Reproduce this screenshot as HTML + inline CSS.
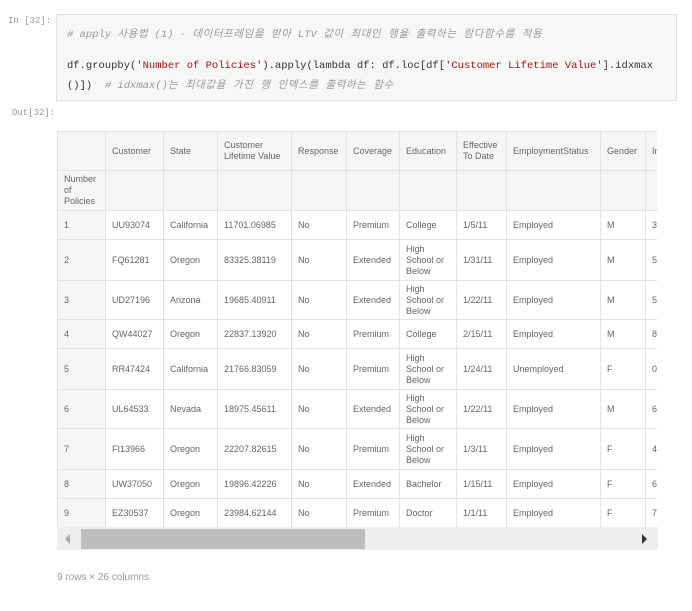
<!DOCTYPE html>
<html><head><meta charset="utf-8"><style>
body{margin:0;width:692px;height:611px;background:#fff;position:relative;overflow:hidden;font-family:"Liberation Sans","Noto Sans CJK KR",sans-serif;}
.p{position:absolute;font-family:"Liberation Mono","Noto Sans CJK KR",monospace;font-size:9px;color:#999;}
.code{position:absolute;left:56px;top:14px;width:621px;height:87px;background:#f7f7f7;border:1px solid #e0e0e0;box-sizing:border-box;font-family:"Liberation Mono","Noto Sans CJK KR",monospace;font-size:10.5px;color:#333;}
.code div{position:absolute;left:10px;white-space:pre;letter-spacing:0px}
.c{color:#999;font-style:italic}
.k{letter-spacing:0.6px}
.s{color:#a31515}
.wrap{position:absolute;left:57px;top:131px;width:600px;height:396px;overflow:hidden;}
table{border-collapse:collapse;table-layout:fixed;width:640px;font-size:9px;color:#666;}
td,th{border:1px solid #e3e3e3;padding:0 6px;font-weight:normal;text-align:left;line-height:11px;vertical-align:middle;overflow:hidden;white-space:normal}
thead th{background:#f5f5f5}
tbody th{background:#f5f5f5}
.sb{position:absolute;left:57px;top:527px;width:601px;height:23px;background:#eee;}
</style></head><body>
<div class="p" style="left:8px;top:16px">In [32]:</div>
<div class="code">
<div class="c" style="top:11px"># apply <span class="k">사용법</span> (1) - <span class="k">데이터프레임을 받아</span> LTV <span class="k">값이 최대인 행을 출력하는 람다함수를 적용</span></div>
<div style="top:45px">df.groupby(<span class="s">'Number of Policies'</span>).apply(lambda df: df.loc[df[<span class="s">'Customer Lifetime Value'</span>].idxmax</div>
<div style="top:62px">()])  <span class="c"># idxmax()<span class="k">는 최대값을 가진 행 인덱스를 출력하는 함수</span></span></div>
</div>
<div class="p" style="left:12px;top:108px">Out[32]:</div>
<div class="wrap"><table>
<colgroup><col style="width:48px"><col style="width:58px"><col style="width:54px"><col style="width:74px"><col style="width:55px"><col style="width:53px"><col style="width:57px"><col style="width:50px"><col style="width:94px"><col style="width:45px"><col style="width:52px"></colgroup>
<thead>
<tr style="height:39px"><th></th><th>Customer</th><th>State</th><th>Customer Lifetime Value</th><th>Response</th><th>Coverage</th><th>Education</th><th>Effective To Date</th><th>EmploymentStatus</th><th>Gender</th><th>Income</th></tr>
<tr style="height:40px"><th>Number of Policies</th><th></th><th></th><th></th><th></th><th></th><th></th><th></th><th></th><th></th><th></th></tr>
</thead><tbody>
<tr style="height:29px"><th>1</th><td>UU93074</td><td>California</td><td>11701.06985</td><td>No</td><td>Premium</td><td>College</td><td>1/5/11</td><td>Employed</td><td>M</td><td>3</td></tr>
<tr style="height:41px"><th>2</th><td>FQ61281</td><td>Oregon</td><td>83325.38119</td><td>No</td><td>Extended</td><td>High School or Below</td><td>1/31/11</td><td>Employed</td><td>M</td><td>5</td></tr>
<tr style="height:39px"><th>3</th><td>UD27196</td><td>Arizona</td><td>19685.40911</td><td>No</td><td>Extended</td><td>High School or Below</td><td>1/22/11</td><td>Employed</td><td>M</td><td>5</td></tr>
<tr style="height:29px"><th>4</th><td>QW44027</td><td>Oregon</td><td>22837.13920</td><td>No</td><td>Premium</td><td>College</td><td>2/15/11</td><td>Employed</td><td>M</td><td>8</td></tr>
<tr style="height:41px"><th>5</th><td>RR47424</td><td>California</td><td>21766.83059</td><td>No</td><td>Premium</td><td>High School or Below</td><td>1/24/11</td><td>Unemployed</td><td>F</td><td>0</td></tr>
<tr style="height:39px"><th>6</th><td>UL64533</td><td>Nevada</td><td>18975.45611</td><td>No</td><td>Extended</td><td>High School or Below</td><td>1/22/11</td><td>Employed</td><td>M</td><td>6</td></tr>
<tr style="height:41px"><th>7</th><td>FI13966</td><td>Oregon</td><td>22207.82615</td><td>No</td><td>Premium</td><td>High School or Below</td><td>1/3/11</td><td>Employed</td><td>F</td><td>4</td></tr>
<tr style="height:29px"><th>8</th><td>UW37050</td><td>Oregon</td><td>19896.42226</td><td>No</td><td>Extended</td><td>Bachelor</td><td>1/15/11</td><td>Employed</td><td>F</td><td>6</td></tr>
<tr style="height:29px"><th>9</th><td>EZ30537</td><td>Oregon</td><td>23984.62144</td><td>No</td><td>Premium</td><td>Doctor</td><td>1/1/11</td><td>Employed</td><td>F</td><td>7</td></tr>
</tbody></table></div>
<div class="sb">
<div style="position:absolute;left:8px;top:7px;width:0;height:0;border-top:5px solid transparent;border-bottom:5px solid transparent;border-right:5px solid #aaa"></div>
<div style="position:absolute;left:24px;top:2px;width:284px;height:20px;background:#bdbdbd"></div>
<div style="position:absolute;left:585px;top:7px;width:0;height:0;border-top:5px solid transparent;border-bottom:5px solid transparent;border-left:5px solid #333"></div>
</div>
<div style="position:absolute;left:57px;top:572px;font-size:10px;color:#999">9 rows × 26 columns</div>
</body></html>
